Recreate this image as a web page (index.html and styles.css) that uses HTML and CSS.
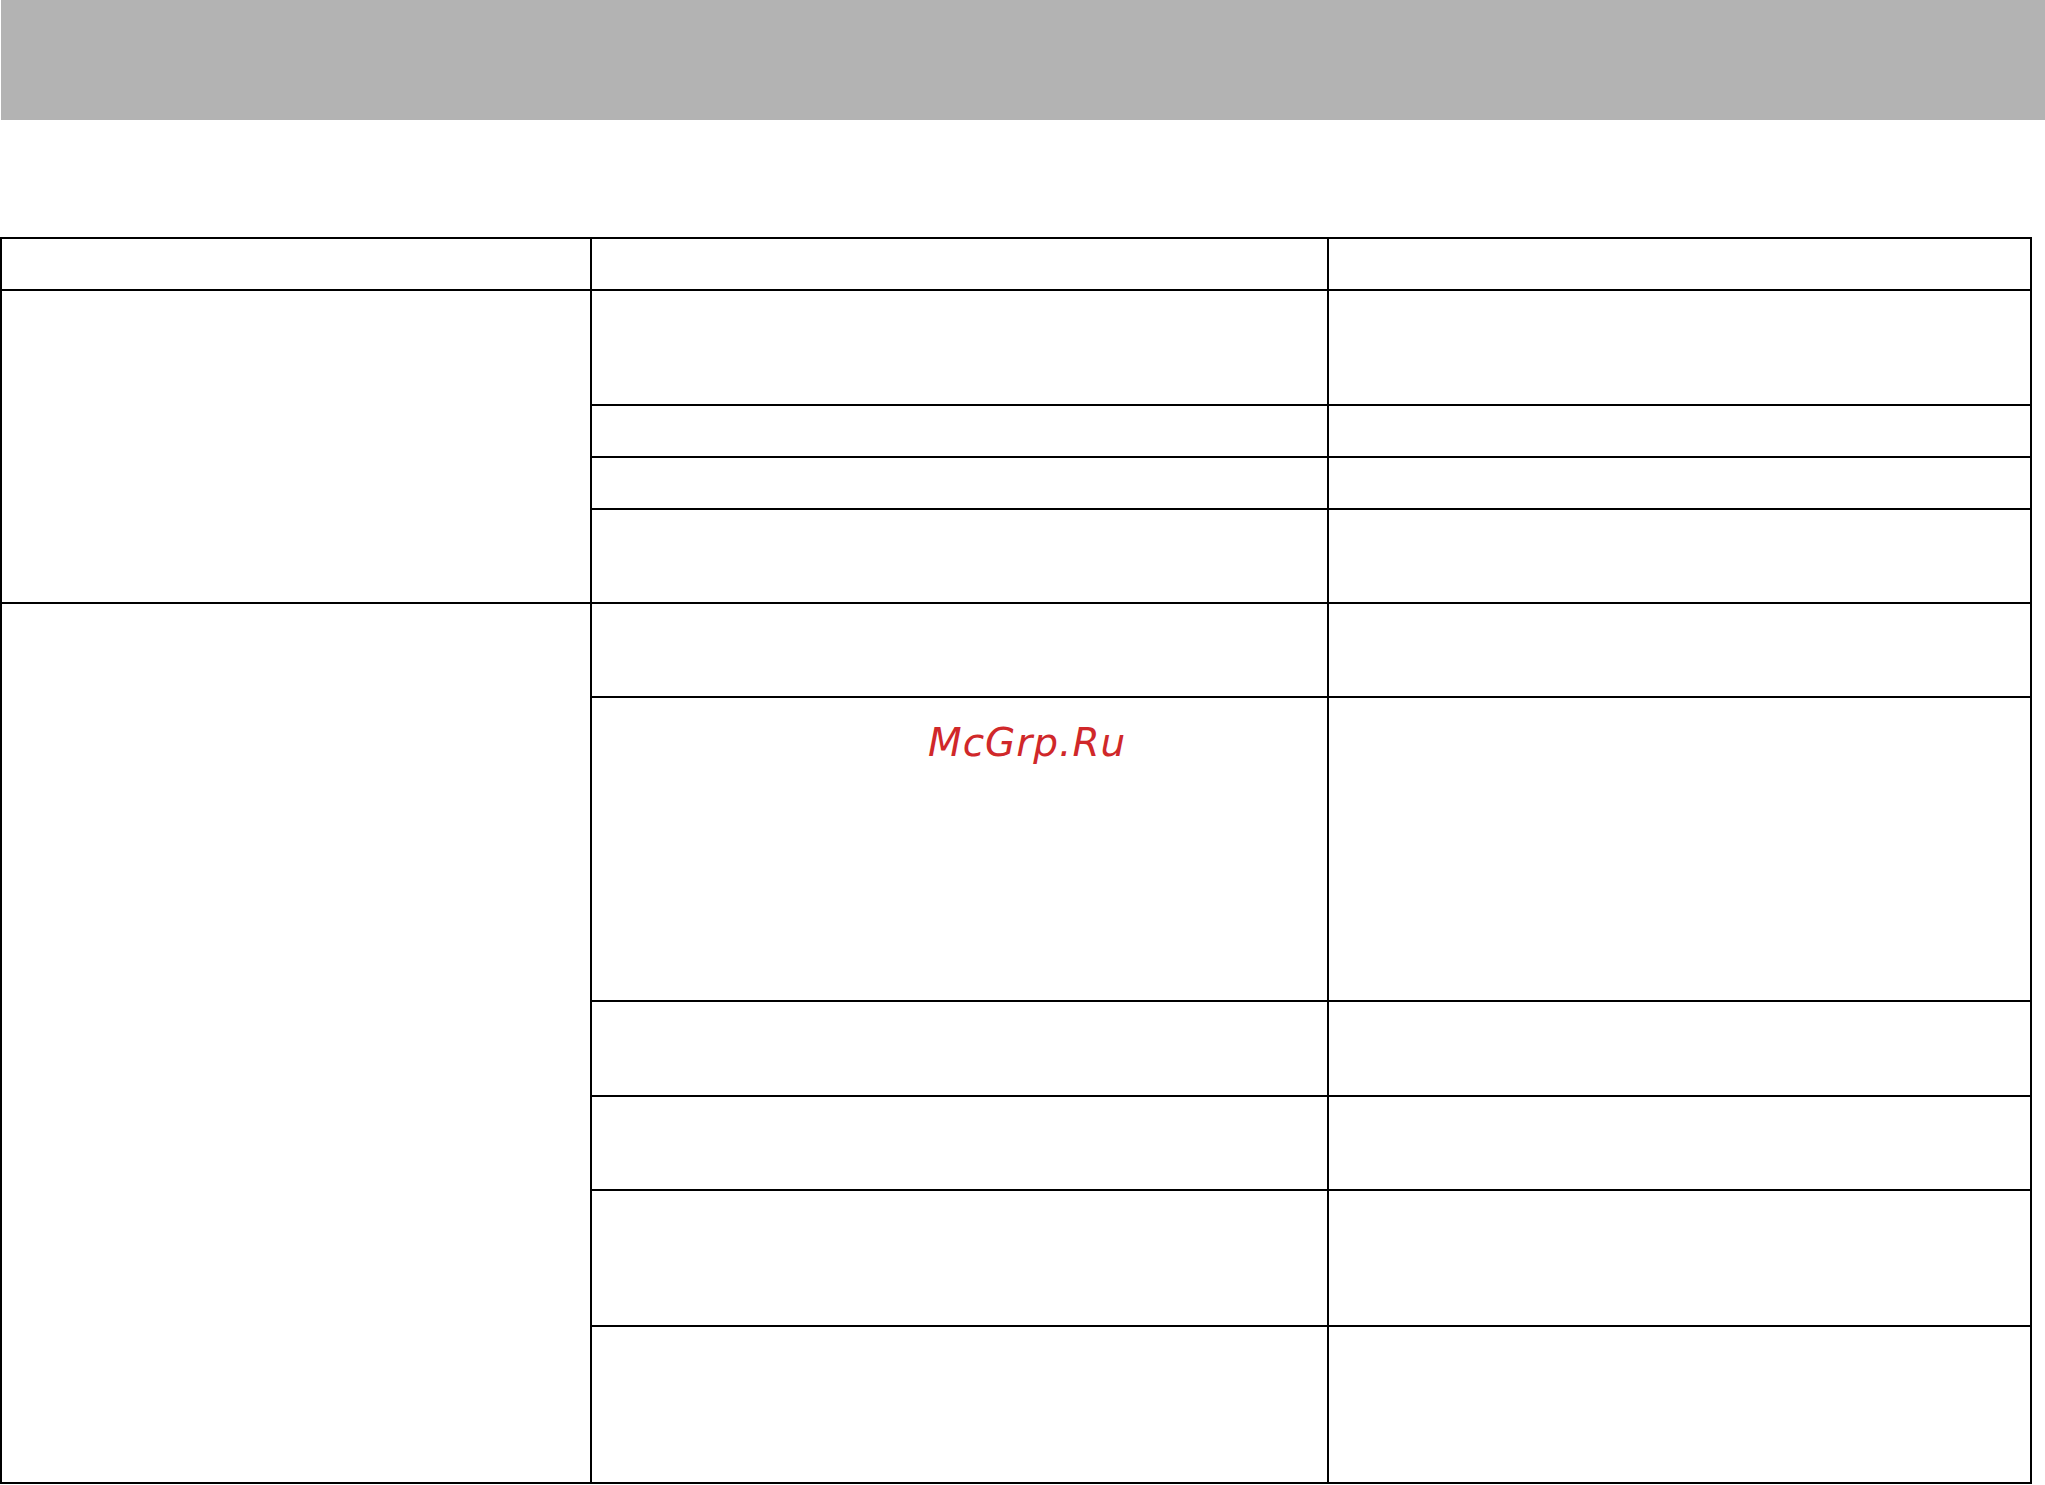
FILE: index.html
```html
<!DOCTYPE html>
<html lang="ru">
<head>
<meta charset="utf-8">
<title>Table</title>
<link rel="stylesheet" href="styles.css">
</head>
<body>
<div class="page">
  <header class="topbar"></header>
  <div class="grid">
    <div class="cell"></div>
    <div class="cell"></div>
    <div class="cell"></div>

    <div class="cell group1"></div>
    <div class="cell"></div><div class="cell"></div>
    <div class="cell"></div><div class="cell"></div>
    <div class="cell"></div><div class="cell"></div>
    <div class="cell"></div><div class="cell"></div>

    <div class="cell group2"></div>
    <div class="cell"></div><div class="cell"></div>
    <div class="cell"></div><div class="cell"></div>
    <div class="cell"></div><div class="cell"></div>
    <div class="cell"></div><div class="cell"></div>
    <div class="cell"></div><div class="cell"></div>
    <div class="cell"></div><div class="cell"></div>
  </div>
  <div class="watermark">McGrp.Ru</div>
</div>
</body>
</html>
```
FILE: styles.css
```css
html, body {
  margin: 0;
  padding: 0;
  background: #ffffff;
}
.page {
  position: relative;
  width: 2045px;
  height: 1485px;
  overflow: hidden;
}
.topbar {
  height: 120px;
  margin-left: 1px;
  background: #b3b3b3;
}
.grid {
  margin-top: 117px;
  width: 2032px;
  box-sizing: border-box;
  padding: 2px;
  background: #000000;
  display: grid;
  grid-template-columns: 588px 735px 701px;
  grid-template-rows: 50px 113px 50px 50px 92px 92px 302px 93px 92px 134px 155px;
  gap: 2px;
}
.cell {
  background: #ffffff;
}
.group1 {
  grid-column: 1;
  grid-row: 2 / span 4;
}
.group2 {
  grid-column: 1;
  grid-row: 6 / span 6;
}
.watermark {
  position: absolute;
  left: 928px;
  top: 723px;
  font-family: "DejaVu Sans", sans-serif;
  font-style: italic;
  font-size: 39px;
  line-height: 1;
  letter-spacing: 1px;
  color: #d0282a;
}
```
